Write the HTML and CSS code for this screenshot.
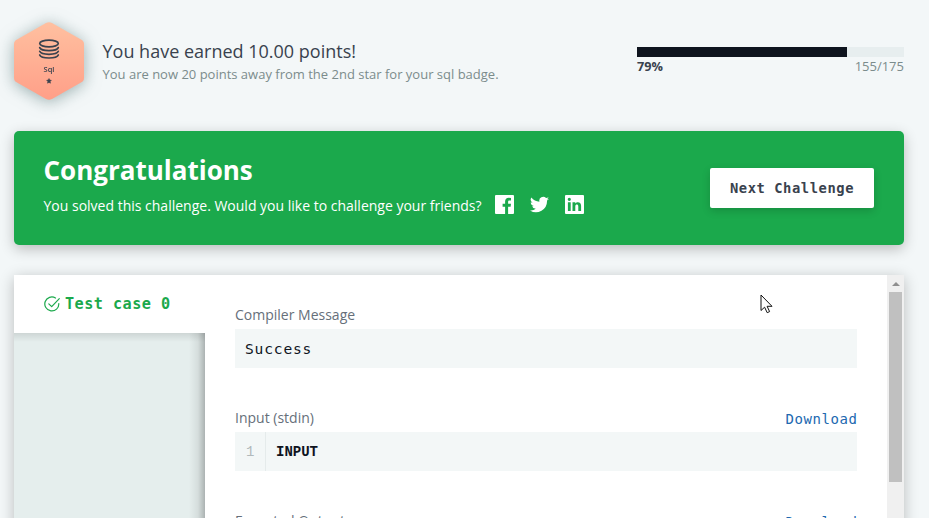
FILE: index.html
```html
<!DOCTYPE html>
<html lang="en">
<head>
<meta charset="utf-8">
<title>Challenge result</title>
<link rel="stylesheet" href="styles.css">
</head>
<body>
<main class="page">
  <header class="score">
    <svg class="badge" width="70" height="78" viewBox="0 0 70 78">
      <defs><linearGradient id="bronze" x1="0" y1="0" x2="0" y2="1"><stop offset="0" stop-color="#ffc0a0"/><stop offset="1" stop-color="#ff9f88"/></linearGradient></defs>
      <path d="M32 1Q35-.6 38 1L67 17.500Q70 19 70 22V56Q70 59 67 60.500L38 77Q35 78.600 32 77L3 60.500Q0 59 0 56V22Q0 19 3 17.500Z" fill="url(#bronze)"/>
      <g fill="none" stroke="#39424e" stroke-width="1.700" stroke-linecap="round">
        <ellipse cx="35" cy="21.500" rx="9.300" ry="3.300"/>
        <path d="M25.700 25.600c1.500 4 17.100 4 18.600 0M25.700 29.300c1.500 4 17.100 4 18.600 0M25.700 33c1.500 4 17.100 4 18.600 0"/>
      </g>
      <text class="badge-name" x="35" y="50" text-anchor="middle">Sql</text>
      <path d="M35 56.500l.8 1.500 1.600.3-1.200 1.200.3 1.700-1.500-.8-1.500.8.300-1.700-1.200-1.200 1.600-.3z" fill="#39424e" stroke="#39424e" stroke-width=".5"/>
    </svg>
    <div class="earned">
      <h1>You have earned 10.00 points!</h1>
      <p>You are now 20 points away from the 2nd star for your sql badge.</p>
    </div>
    <div class="progress">
      <div class="track"><div class="fill"></div></div>
      <div class="numbers"><b>79%</b><span>155/175</span></div>
    </div>
  </header>

  <section class="banner">
    <div class="message">
      <h2>Congratulations</h2>
      <div class="share">
        <span>You solved this challenge. Would you like to challenge your friends?</span>
        <svg width="19" height="19" viewBox="0 0 19 19"><path fill="#fff" d="M1 0h17q1 0 1 1v17q0 1-1 1h-4.900v-7.300h2.500l.4-2.900h-2.900V6.900c0-.9.400-1.400 1.500-1.400H16V3q-.8-.2-2.200-.2c-2.300 0-3.700 1.400-3.700 3.800v2.200H7.600v2.900h2.500V19H1q-1 0-1-1V1q0-1 1-1z"/></svg>
        <svg width="19" height="19" viewBox="0 0 24 24"><path fill="#fff" d="M24 4.600a10 10 0 0 1-2.800.8 5 5 0 0 0 2.200-2.700 10 10 0 0 1-3.100 1.200 4.900 4.900 0 0 0-8.400 4.500A14 14 0 0 1 1.700 3.100a4.900 4.900 0 0 0 1.500 6.600 5 5 0 0 1-2.200-.6 4.900 4.900 0 0 0 3.900 4.900 5 5 0 0 1-2.200.1 4.900 4.900 0 0 0 4.600 3.400A10 10 0 0 1 0 19.500a14 14 0 0 0 21.500-12.400A10 10 0 0 0 24 4.600z"/></svg>
        <svg width="19" height="19" viewBox="0 0 19 19"><path fill="#fff" fill-rule="evenodd" d="M1 0h17q1 0 1 1v17q0 1-1 1H1q-1 0-1-1V1q0-1 1-1zM2.900 7.200V16h2.800V7.200zM4.300 2.700a1.600 1.600 0 1 0 0 3.200 1.600 1.600 0 0 0 0-3.200zM7.500 7.200V16h2.800v-4.500c0-2.600 3-2.500 3 0V16h2.800v-5.300c0-4-4.200-4.500-5.800-2.200V7.200z"/></svg>
      </div>
    </div>
    <button class="next">Next Challenge</button>
  </section>

  <section class="results">
    <aside class="cases">
      <button class="case">
        <svg width="17" height="17" viewBox="0 0 17 17" fill="none" stroke="#1ba94c" stroke-width="1.200" stroke-linecap="round" stroke-linejoin="round"><path d="M11.500 2A7 7 0 1 0 14.800 7.500"/><path d="M4.800 7.800L7.700 10.700 15.300 2.600"/></svg>
        <span>Test case 0</span>
      </button>
      <div class="rest"></div>
    </aside>
    <div class="detail">
      <div class="label"><span>Compiler Message</span></div>
      <div class="output">Success</div>
      <div class="label"><span>Input (stdin)</span><a>Download</a></div>
      <div class="output code"><span class="line">1</span><b>INPUT</b></div>
      <div class="label"><span>Expected Output</span><a>Download</a></div>
    </div>
    <div class="scrollbar"><div class="arrow"></div><div class="thumb"></div></div>
  </section>
  <svg class="cursor" width="13" height="20" viewBox="0 0 13 20"><path d="M1 1V16.500L4.600 13.200 7.200 18.700 9.600 17.600 7.100 12.300H12Z" fill="#fff" stroke="#111" stroke-width="1"/></svg>
</main>
</body>
</html>
```
FILE: styles.css
```css
* { box-sizing: border-box; }
html, body { height: 100%; overflow: hidden; }
body { margin: 0; background: #f3f7f8; color: #39424e; font-family: "Open Sans", sans-serif; font-size: 14px; }
h1, h2, p { margin: 0; }
button { border: 0; cursor: pointer; }
.page { position: relative; padding: 22px 25px 0 14px; height: 518px; display: flex; flex-direction: column; overflow: hidden; }

.score { display: flex; height: 109px; flex: none; }
.badge { overflow: visible; filter: drop-shadow(0 2px 8px rgba(80, 115, 115, .55)); }
.badge-name { font-size: 7.500px; font-weight: 600; fill: #39424e; }
.earned { margin-left: 18.500px; padding-top: 17px; flex: 1; white-space: nowrap; }
.earned h1 { font-size: 18px; font-weight: 400; line-height: 25px; }
.earned p { font-size: 13px; line-height: 20px; color: #7b8c8c; }
.progress { width: 267px; padding-top: 25px; }
.track { height: 10px; background: #e7eeef; }
.fill { width: 210px; height: 10px; background: #0e141e; }
.numbers { display: flex; justify-content: space-between; font-size: 13px; line-height: 19px; }
.numbers span { color: #7b8c8c; }
.numbers b { font-size: 12.700px; }

.banner { flex: none; height: 114px; padding: 0 30px; display: flex; align-items: center; justify-content: space-between; background: #1ba94c; border-radius: 5px; box-shadow: 0 4px 14px rgba(0, 0, 0, .24); color: #fff; }
.message { margin: 0 0 7px -.5px; }
.banner h2 { font-size: 26px; line-height: 36px; font-weight: 700; }
.share { display: flex; align-items: center; gap: 16px; margin-top: 5px; height: 24px; white-space: nowrap; }
.share span { margin-right: -3px; }
.share svg { margin-bottom: 1px; }
.next { width: 164px; height: 40px; padding: 0; background: #fff; border-radius: 2px; box-shadow: 0 3px 9px rgba(0, 0, 0, .16); color: #39424e; }
.next, .case, .output, .label a { font-family: "DejaVu Sans Mono", monospace; }
.next, .case { font-weight: 700; }
.next { font-size: 13.800px; letter-spacing: .56px; }

.results { flex: none; height: 300px; margin-top: 30px; display: flex; box-shadow: 0 3px 14px rgba(0, 0, 0, .24); }
.cases { width: 191px; display: flex; flex-direction: column; }
.rest { flex: 1; background: linear-gradient(to bottom, rgba(0, 0, 0, .1), transparent 9px), linear-gradient(to left, rgba(0, 0, 0, .25), rgba(0, 0, 0, .07) 7px, transparent 16px), #e5eeed; }
.case { width: 191px; height: 58px; padding: 0 0 0 30px; display: flex; align-items: center; gap: 4px; background: #fff; color: #1ba94c; font-size: 15.200px; letter-spacing: .46px; white-space: nowrap; }
.detail { flex: 1; padding: 29px 30px 0; background: #fff; }
.label { height: 25px; display: flex; justify-content: space-between; align-items: center; padding-bottom: 4px; color: #666f7a; line-height: 20px; }
.label a { color: #2168b0; font-size: 14px; letter-spacing: .57px; margin-right: -.5px; padding-top: 3px; }
.output { height: 39px; margin-bottom: 39px; padding-left: 10px; background: #f3f7f7; color: #0e141e; font-size: 14.600px; letter-spacing: .81px; line-height: 39px; }
.output.code { display: flex; padding: 0; font-family: "Liberation Mono", monospace; font-size: 14px; letter-spacing: 0; line-height: 41px; }
.line { width: 31px; padding-left: 11px; border-right: 1px solid #e5ebeb; color: #b1b9bb; }
.code b { padding-left: 10px; }
.scrollbar { width: 17px; padding: 7px 2px 0; background: #f0f0f0; }
.code .line { height: 39px; }
.arrow { width: 0; margin: 0 auto 6px; border: 4px solid transparent; border-top: 0; border-bottom-color: #8f8f8f; }
.thumb { height: 190px; background: #c0c0c0; }
.cursor { position: absolute; left: 759.500px; top: 294px; }
```
